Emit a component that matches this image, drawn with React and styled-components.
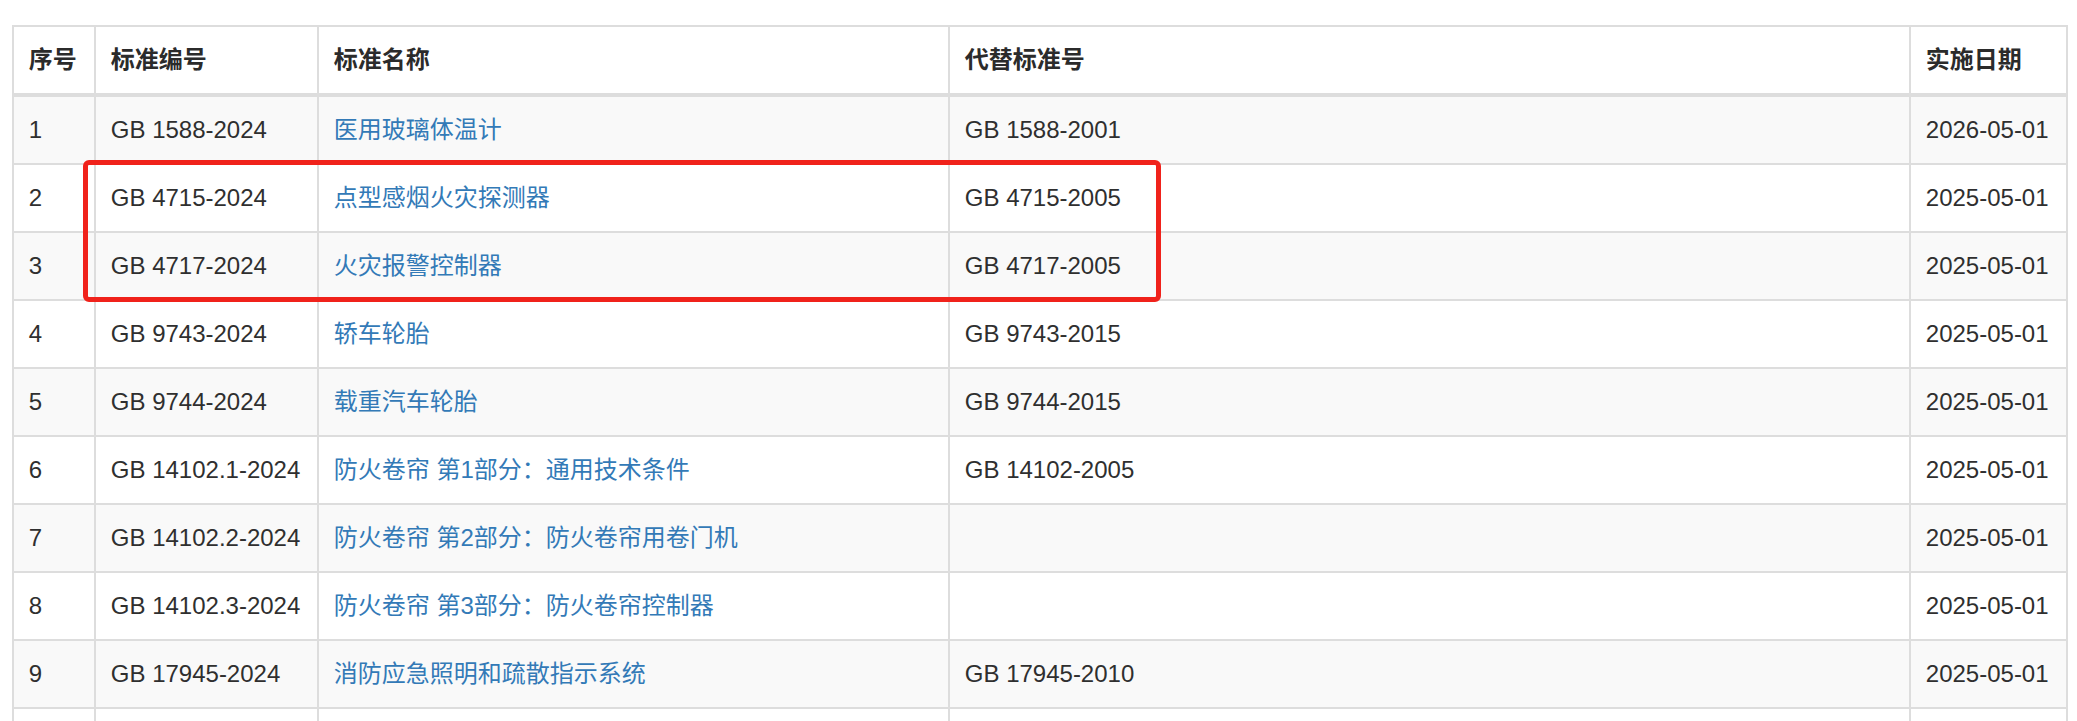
import React from "react";
import styled, { createGlobalStyle } from "styled-components";

const GlobalStyle = createGlobalStyle`
  html, body {
    margin: 0;
    padding: 0;
    background: #ffffff;
  }
  body {
    font-family: "Liberation Sans", Arial, "Noto Sans CJK SC", sans-serif;
    color: #333333;
  }
`;

const Page = styled.div`
  padding: 25px 0 0 12px;
`;

const TableWrap = styled.div`
  position: relative;
  width: 2054px;
`;

const Table = styled.table`
  width: 2054px;
  table-layout: fixed;
  border-collapse: collapse;
  border-spacing: 0;
  border: 2px solid #dddddd;
  font-size: 24px;
  line-height: 36.4px;
`;

const HeadCell = styled.th`
  text-align: left;
  font-weight: 700;
  font-family: "Liberation Sans", Arial, "Noto Sans CJK SC", sans-serif;
  color: #2b2b2b;
  padding: 14.8px 14.8px;
  border: 2px solid #dddddd;
  border-bottom: 4px solid #dddddd;
  white-space: nowrap;
`;

const Row = styled.tr`
  background: ${(p) => (p.$striped ? "#f9f9f9" : "#ffffff")};
`;

const Cell = styled.td`
  padding: 14.8px 14.8px;
  border: 2px solid #dddddd;
  white-space: nowrap;
  overflow: hidden;
  vertical-align: top;
  color: #2f2f2f;
`;

const TitleLink = styled.a`
  color: #337ab7;
  text-decoration: none;
`;

const Highlight = styled.div`
  position: absolute;
  left: 71px;
  top: 135px;
  width: 1078px;
  height: 142px;
  box-sizing: border-box;
  border: 5px solid #f0221b;
  border-radius: 6px;
  pointer-events: none;
`;

const columns = [
  { key: "no", label: "序号", width: 82 },
  { key: "code", label: "标准编号", width: 223 },
  { key: "name", label: "标准名称", width: 631 },
  { key: "replace", label: "代替标准号", width: 961 },
  { key: "date", label: "实施日期", width: 157 },
];

const rows = [
  ["1", "GB 1588-2024", "医用玻璃体温计", "GB 1588-2001", "2026-05-01"],
  ["2", "GB 4715-2024", "点型感烟火灾探测器", "GB 4715-2005", "2025-05-01"],
  ["3", "GB 4717-2024", "火灾报警控制器", "GB 4717-2005", "2025-05-01"],
  ["4", "GB 9743-2024", "轿车轮胎", "GB 9743-2015", "2025-05-01"],
  ["5", "GB 9744-2024", "载重汽车轮胎", "GB 9744-2015", "2025-05-01"],
  ["6", "GB 14102.1-2024", "防火卷帘 第1部分：通用技术条件", "GB 14102-2005", "2025-05-01"],
  ["7", "GB 14102.2-2024", "防火卷帘 第2部分：防火卷帘用卷门机", "", "2025-05-01"],
  ["8", "GB 14102.3-2024", "防火卷帘 第3部分：防火卷帘控制器", "", "2025-05-01"],
  ["9", "GB 17945-2024", "消防应急照明和疏散指示系统", "GB 17945-2010", "2025-05-01"],
  ["10", "GB 25972-2024", "气体灭火系统及部件", "GB 25972-2010", "2025-05-01"],
];

export default function App() {
  return (
    <>
      <GlobalStyle />
      <Page>
        <TableWrap>
          <Table>
            <colgroup>
              {columns.map((c) => (
                <col key={c.key} style={{ width: c.width }} />
              ))}
            </colgroup>
            <thead>
              <tr>
                {columns.map((c) => (
                  <HeadCell key={c.key}>{c.label}</HeadCell>
                ))}
              </tr>
            </thead>
            <tbody>
              {rows.map((r, i) => (
                <Row key={r[0]} $striped={i % 2 === 0}>
                  <Cell>{r[0]}</Cell>
                  <Cell>{r[1]}</Cell>
                  <Cell>
                    <TitleLink href="#">{r[2]}</TitleLink>
                  </Cell>
                  <Cell>{r[3]}</Cell>
                  <Cell>{r[4]}</Cell>
                </Row>
              ))}
            </tbody>
          </Table>
          <Highlight />
        </TableWrap>
      </Page>
    </>
  );
}
